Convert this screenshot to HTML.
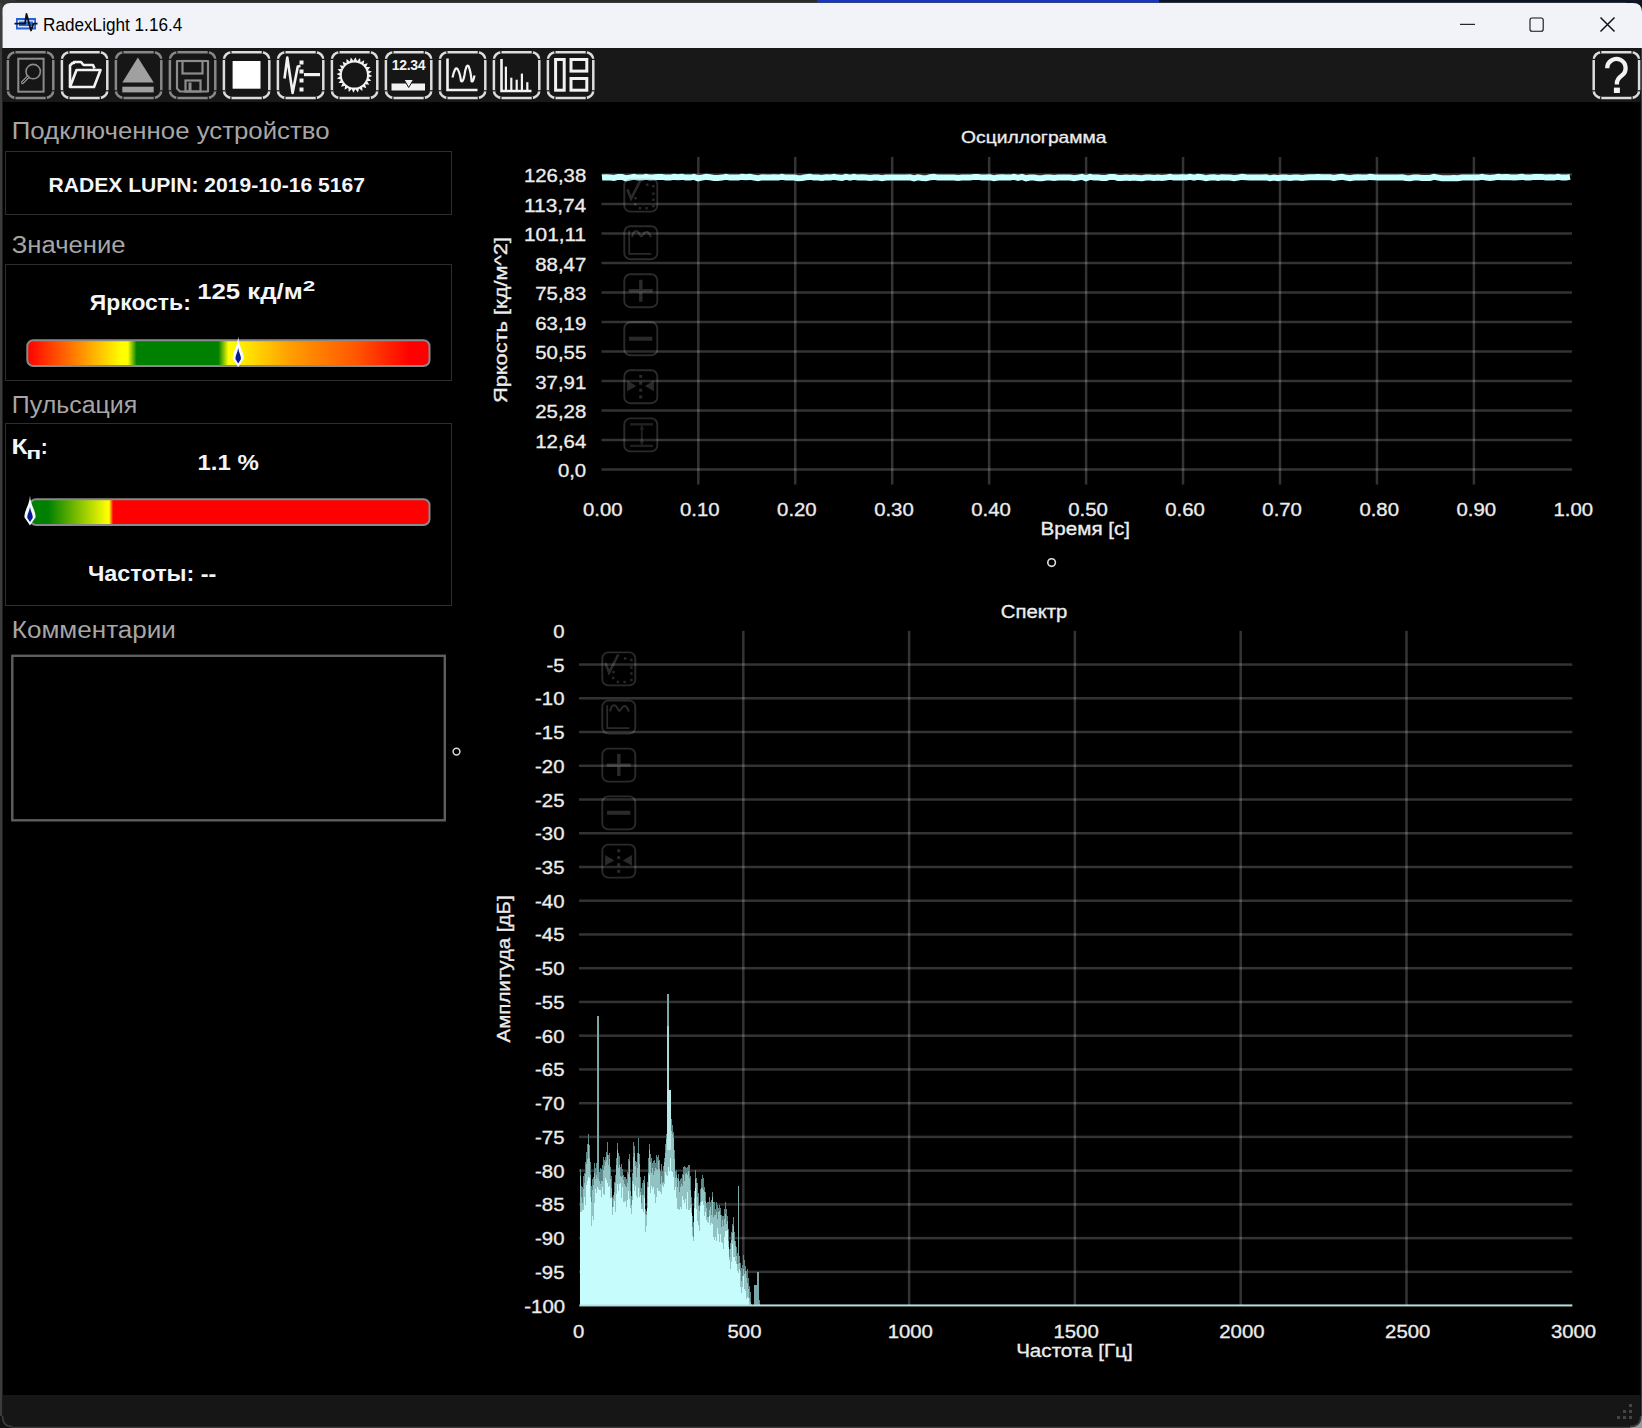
<!DOCTYPE html>
<html><head><meta charset="utf-8"><title>RadexLight</title>
<style>html,body{margin:0;padding:0;background:#000;overflow:hidden;width:1642px;height:1428px}
svg{display:block;font-family:"Liberation Sans", sans-serif}</style></head>
<body><svg width="1642" height="1428" viewBox="0 0 1642 1428">
<rect x="0" y="0" width="1642" height="1428" fill="#000"/>
<rect x="0" y="0" width="817" height="3" fill="#2a2a2a"/>
<rect x="817" y="0" width="342" height="3" fill="#1534c8"/>
<rect x="1159" y="0" width="483" height="3" fill="#0a1428"/>
<rect x="0" y="2" width="1642" height="1" fill="#4a4a4a" opacity="0.6"/>
<rect x="0" y="0" width="16" height="16" fill="#333"/>
<rect x="1626" y="0" width="16" height="16" fill="#0e1626"/>
<rect x="0" y="3" width="2.5" height="1425" fill="#3c3c3c"/>
<rect x="1640.8" y="48" width="1.2" height="1380" fill="#3c3c3c"/>
<path d="M2.5 48 V11 Q2.5 3 10.5 3 H1633 Q1642 3 1642 12 V48 Z" fill="#f1f3f9"/>
<rect x="16" y="18" width="20" height="11.5" fill="#2563d9"/>
<rect x="17.8" y="20.2" width="16.4" height="7.2" fill="#f1f3f9"/>
<rect x="19" y="21.5" width="14" height="4.6" fill="#2563d9"/>
<polyline points="14.5,23.6 25,23.6 26.5,14 31,30.5 33.5,23.6 37.5,23.6" fill="none" stroke="#111" stroke-width="1.8" stroke-linejoin="round"/>
<text x="43" y="31" font-size="17.5" fill="#000" font-weight="400" text-anchor="start" textLength="139.3" lengthAdjust="spacingAndGlyphs" >RadexLight 1.16.4</text>
<rect x="1460" y="23.8" width="15" height="1.1" fill="#111"/>
<rect x="1530" y="18" width="13.2" height="13.2" rx="2" fill="none" stroke="#111" stroke-width="1.1"/>
<path d="M1600.5 17.5 L1614.5 31.5 M1614.5 17.5 L1600.5 31.5" stroke="#111" stroke-width="1.45"/>
<rect x="2.5" y="48" width="1638.3" height="54" fill="#181818"/>
<rect x="2.5" y="1395" width="1638.3" height="31.6" fill="#161616"/>
<rect x="1629" y="1404" width="3" height="3" fill="#444"/>
<rect x="1623" y="1410" width="3" height="3" fill="#444"/>
<rect x="1629" y="1410" width="3" height="3" fill="#444"/>
<rect x="1617" y="1416" width="3" height="3" fill="#444"/>
<rect x="1623" y="1416" width="3" height="3" fill="#444"/>
<rect x="1629" y="1416" width="3" height="3" fill="#444"/>
<rect x="0" y="1426.6" width="1642" height="1.4" fill="#3c3c3c"/>
<path d="M0 1416 V1428 H12 V1426.6 Q2.5 1426.6 2.5 1417 V1416 Z" fill="#121212"/>
<path d="M2.5 1416 Q2.5 1426.6 12 1426.6" fill="none" stroke="#3c3c3c" stroke-width="1.6"/>
<path d="M1642 1416 V1428 H1630 V1426.6 Q1640.8 1426.6 1640.8 1417 V1416 Z" fill="#9a9a9a"/>
<path d="M1640.8 1416 Q1640.8 1426.6 1630 1426.6" fill="none" stroke="#3c3c3c" stroke-width="1.6"/>
<rect x="7.9" y="52.3" width="45.4" height="45.6" rx="7.5" fill="#161616" stroke="#888" stroke-width="2.5"/>
<rect x="14.3" y="50.5" width="1.2" height="3.2" fill="#181818"/>
<rect x="14.3" y="96.5" width="1.2" height="3.2" fill="#181818"/>
<rect x="45.7" y="50.5" width="1.2" height="3.2" fill="#181818"/>
<rect x="45.7" y="96.5" width="1.2" height="3.2" fill="#181818"/>
<rect x="6.0" y="58.8" width="3.2" height="1.2" fill="#181818"/>
<rect x="52.0" y="58.8" width="3.2" height="1.2" fill="#181818"/>
<rect x="6.0" y="90.2" width="3.2" height="1.2" fill="#181818"/>
<rect x="52.0" y="90.2" width="3.2" height="1.2" fill="#181818"/>
<rect x="61.9" y="52.3" width="45.4" height="45.6" rx="7.5" fill="#161616" stroke="#dcdcdc" stroke-width="2.5"/>
<rect x="68.30000000000001" y="50.5" width="1.2" height="3.2" fill="#181818"/>
<rect x="68.30000000000001" y="96.5" width="1.2" height="3.2" fill="#181818"/>
<rect x="99.7" y="50.5" width="1.2" height="3.2" fill="#181818"/>
<rect x="99.7" y="96.5" width="1.2" height="3.2" fill="#181818"/>
<rect x="60.0" y="58.8" width="3.2" height="1.2" fill="#181818"/>
<rect x="106.0" y="58.8" width="3.2" height="1.2" fill="#181818"/>
<rect x="60.0" y="90.2" width="3.2" height="1.2" fill="#181818"/>
<rect x="106.0" y="90.2" width="3.2" height="1.2" fill="#181818"/>
<rect x="115.9" y="52.3" width="45.4" height="45.6" rx="7.5" fill="#161616" stroke="#888" stroke-width="2.5"/>
<rect x="122.30000000000001" y="50.5" width="1.2" height="3.2" fill="#181818"/>
<rect x="122.30000000000001" y="96.5" width="1.2" height="3.2" fill="#181818"/>
<rect x="153.7" y="50.5" width="1.2" height="3.2" fill="#181818"/>
<rect x="153.7" y="96.5" width="1.2" height="3.2" fill="#181818"/>
<rect x="114.0" y="58.8" width="3.2" height="1.2" fill="#181818"/>
<rect x="160.0" y="58.8" width="3.2" height="1.2" fill="#181818"/>
<rect x="114.0" y="90.2" width="3.2" height="1.2" fill="#181818"/>
<rect x="160.0" y="90.2" width="3.2" height="1.2" fill="#181818"/>
<rect x="169.9" y="52.3" width="45.4" height="45.6" rx="7.5" fill="#161616" stroke="#888" stroke-width="2.5"/>
<rect x="176.3" y="50.5" width="1.2" height="3.2" fill="#181818"/>
<rect x="176.3" y="96.5" width="1.2" height="3.2" fill="#181818"/>
<rect x="207.7" y="50.5" width="1.2" height="3.2" fill="#181818"/>
<rect x="207.7" y="96.5" width="1.2" height="3.2" fill="#181818"/>
<rect x="168.0" y="58.8" width="3.2" height="1.2" fill="#181818"/>
<rect x="214.0" y="58.8" width="3.2" height="1.2" fill="#181818"/>
<rect x="168.0" y="90.2" width="3.2" height="1.2" fill="#181818"/>
<rect x="214.0" y="90.2" width="3.2" height="1.2" fill="#181818"/>
<rect x="223.9" y="52.3" width="45.4" height="45.6" rx="7.5" fill="#161616" stroke="#dcdcdc" stroke-width="2.5"/>
<rect x="230.3" y="50.5" width="1.2" height="3.2" fill="#181818"/>
<rect x="230.3" y="96.5" width="1.2" height="3.2" fill="#181818"/>
<rect x="261.7" y="50.5" width="1.2" height="3.2" fill="#181818"/>
<rect x="261.7" y="96.5" width="1.2" height="3.2" fill="#181818"/>
<rect x="222.0" y="58.8" width="3.2" height="1.2" fill="#181818"/>
<rect x="268.0" y="58.8" width="3.2" height="1.2" fill="#181818"/>
<rect x="222.0" y="90.2" width="3.2" height="1.2" fill="#181818"/>
<rect x="268.0" y="90.2" width="3.2" height="1.2" fill="#181818"/>
<rect x="277.9" y="52.3" width="45.4" height="45.6" rx="7.5" fill="#161616" stroke="#dcdcdc" stroke-width="2.5"/>
<rect x="284.29999999999995" y="50.5" width="1.2" height="3.2" fill="#181818"/>
<rect x="284.29999999999995" y="96.5" width="1.2" height="3.2" fill="#181818"/>
<rect x="315.7" y="50.5" width="1.2" height="3.2" fill="#181818"/>
<rect x="315.7" y="96.5" width="1.2" height="3.2" fill="#181818"/>
<rect x="276.0" y="58.8" width="3.2" height="1.2" fill="#181818"/>
<rect x="322.0" y="58.8" width="3.2" height="1.2" fill="#181818"/>
<rect x="276.0" y="90.2" width="3.2" height="1.2" fill="#181818"/>
<rect x="322.0" y="90.2" width="3.2" height="1.2" fill="#181818"/>
<rect x="331.9" y="52.3" width="45.4" height="45.6" rx="7.5" fill="#161616" stroke="#dcdcdc" stroke-width="2.5"/>
<rect x="338.29999999999995" y="50.5" width="1.2" height="3.2" fill="#181818"/>
<rect x="338.29999999999995" y="96.5" width="1.2" height="3.2" fill="#181818"/>
<rect x="369.7" y="50.5" width="1.2" height="3.2" fill="#181818"/>
<rect x="369.7" y="96.5" width="1.2" height="3.2" fill="#181818"/>
<rect x="330.0" y="58.8" width="3.2" height="1.2" fill="#181818"/>
<rect x="376.0" y="58.8" width="3.2" height="1.2" fill="#181818"/>
<rect x="330.0" y="90.2" width="3.2" height="1.2" fill="#181818"/>
<rect x="376.0" y="90.2" width="3.2" height="1.2" fill="#181818"/>
<rect x="385.9" y="52.3" width="45.4" height="45.6" rx="7.5" fill="#161616" stroke="#dcdcdc" stroke-width="2.5"/>
<rect x="392.29999999999995" y="50.5" width="1.2" height="3.2" fill="#181818"/>
<rect x="392.29999999999995" y="96.5" width="1.2" height="3.2" fill="#181818"/>
<rect x="423.7" y="50.5" width="1.2" height="3.2" fill="#181818"/>
<rect x="423.7" y="96.5" width="1.2" height="3.2" fill="#181818"/>
<rect x="384.0" y="58.8" width="3.2" height="1.2" fill="#181818"/>
<rect x="430.0" y="58.8" width="3.2" height="1.2" fill="#181818"/>
<rect x="384.0" y="90.2" width="3.2" height="1.2" fill="#181818"/>
<rect x="430.0" y="90.2" width="3.2" height="1.2" fill="#181818"/>
<rect x="439.9" y="52.3" width="45.4" height="45.6" rx="7.5" fill="#161616" stroke="#dcdcdc" stroke-width="2.5"/>
<rect x="446.29999999999995" y="50.5" width="1.2" height="3.2" fill="#181818"/>
<rect x="446.29999999999995" y="96.5" width="1.2" height="3.2" fill="#181818"/>
<rect x="477.7" y="50.5" width="1.2" height="3.2" fill="#181818"/>
<rect x="477.7" y="96.5" width="1.2" height="3.2" fill="#181818"/>
<rect x="438.0" y="58.8" width="3.2" height="1.2" fill="#181818"/>
<rect x="484.0" y="58.8" width="3.2" height="1.2" fill="#181818"/>
<rect x="438.0" y="90.2" width="3.2" height="1.2" fill="#181818"/>
<rect x="484.0" y="90.2" width="3.2" height="1.2" fill="#181818"/>
<rect x="493.9" y="52.3" width="45.4" height="45.6" rx="7.5" fill="#161616" stroke="#dcdcdc" stroke-width="2.5"/>
<rect x="500.29999999999995" y="50.5" width="1.2" height="3.2" fill="#181818"/>
<rect x="500.29999999999995" y="96.5" width="1.2" height="3.2" fill="#181818"/>
<rect x="531.7" y="50.5" width="1.2" height="3.2" fill="#181818"/>
<rect x="531.7" y="96.5" width="1.2" height="3.2" fill="#181818"/>
<rect x="492.0" y="58.8" width="3.2" height="1.2" fill="#181818"/>
<rect x="538.0" y="58.8" width="3.2" height="1.2" fill="#181818"/>
<rect x="492.0" y="90.2" width="3.2" height="1.2" fill="#181818"/>
<rect x="538.0" y="90.2" width="3.2" height="1.2" fill="#181818"/>
<rect x="547.9" y="52.3" width="45.4" height="45.6" rx="7.5" fill="#161616" stroke="#dcdcdc" stroke-width="2.5"/>
<rect x="554.3" y="50.5" width="1.2" height="3.2" fill="#181818"/>
<rect x="554.3" y="96.5" width="1.2" height="3.2" fill="#181818"/>
<rect x="585.7" y="50.5" width="1.2" height="3.2" fill="#181818"/>
<rect x="585.7" y="96.5" width="1.2" height="3.2" fill="#181818"/>
<rect x="546.0" y="58.8" width="3.2" height="1.2" fill="#181818"/>
<rect x="592.0" y="58.8" width="3.2" height="1.2" fill="#181818"/>
<rect x="546.0" y="90.2" width="3.2" height="1.2" fill="#181818"/>
<rect x="592.0" y="90.2" width="3.2" height="1.2" fill="#181818"/>
<rect x="1593.7" y="52.3" width="45.4" height="45.6" rx="7.5" fill="#161616" stroke="#dcdcdc" stroke-width="2.5"/>
<rect x="1600.1000000000001" y="50.5" width="1.2" height="3.2" fill="#181818"/>
<rect x="1600.1000000000001" y="96.5" width="1.2" height="3.2" fill="#181818"/>
<rect x="1631.5" y="50.5" width="1.2" height="3.2" fill="#181818"/>
<rect x="1631.5" y="96.5" width="1.2" height="3.2" fill="#181818"/>
<rect x="1591.8" y="58.8" width="3.2" height="1.2" fill="#181818"/>
<rect x="1637.8" y="58.8" width="3.2" height="1.2" fill="#181818"/>
<rect x="1591.8" y="90.2" width="3.2" height="1.2" fill="#181818"/>
<rect x="1637.8" y="90.2" width="3.2" height="1.2" fill="#181818"/>
<rect x="18.3" y="58.7" width="25.3" height="33" fill="none" stroke="#8c8c8c" stroke-width="2"/>
<circle cx="33.2" cy="71.6" r="7.2" fill="none" stroke="#8c8c8c" stroke-width="1.6"/>
<line x1="28" y1="77" x2="22.5" y2="82.5" stroke="#8c8c8c" stroke-width="3.2" stroke-linecap="round"/>
<line x1="28" y1="77" x2="22.5" y2="82.5" stroke="#141414" stroke-width="1" stroke-linecap="round"/>
<path d="M70 87 V65.5 L72.5 63 H74 V62 H81 L83.5 65 H93 L94.5 68.5" fill="none" stroke="#f2f2f2" stroke-width="2.6" stroke-linejoin="round"/>
<path d="M70 87 L76.5 70 H100.5 L94 87 Z" fill="none" stroke="#f2f2f2" stroke-width="2.6" stroke-linejoin="round"/>
<path d="M137.9 57.6 L153.7 82.4 H122.3 Z" fill="#a0a0a0"/>
<rect x="122.3" y="86.7" width="31.4" height="5.7" fill="#a0a0a0"/>
<path d="M177 61 H208 V91.5 H180 L177 88.5 Z" fill="none" stroke="#8c8c8c" stroke-width="2.2" stroke-linejoin="round"/>
<rect x="182.5" y="61" width="20" height="12.5" fill="none" stroke="#8c8c8c" stroke-width="2.2"/>
<rect x="185.5" y="80.5" width="15" height="11" fill="none" stroke="#8c8c8c" stroke-width="2.2"/>
<rect x="188.5" y="82.5" width="3" height="9" fill="#8c8c8c"/>
<rect x="232.6" y="61" width="27.9" height="27.7" fill="#fff"/>
<path d="M284.5 78.5 L287.3 57.5 L292.6 93 L297.8 66.5 L300.5 66" fill="none" stroke="#f2f2f2" stroke-width="2.6" stroke-linejoin="round"/>
<rect x="299.5" y="60.5" width="4" height="4" fill="#f2f2f2"/>
<rect x="299.5" y="69.5" width="4" height="4" fill="#f2f2f2"/>
<rect x="299.5" y="78.5" width="4" height="4" fill="#f2f2f2"/>
<rect x="299.5" y="87.5" width="4" height="4" fill="#f2f2f2"/>
<rect x="304" y="73" width="16" height="3.2" fill="#f2f2f2"/>
<polygon points="372.17,76.07 368.34,77.69 371.29,80.63 367.17,81.21 369.25,84.81 365.13,84.30 366.21,88.32 362.35,86.76 362.36,90.92 359.04,88.42 357.97,92.44 355.41,89.16 353.33,92.77 351.71,88.94 348.77,91.89 348.19,87.77 344.59,89.85 345.10,85.73 341.08,86.81 342.64,82.95 338.48,82.96 340.98,79.64 336.96,78.57 340.24,76.01 336.63,73.93 340.46,72.31 337.51,69.37 341.63,68.79 339.55,65.19 343.67,65.70 342.59,61.68 346.45,63.24 346.44,59.08 349.76,61.58 350.83,57.56 353.39,60.84 355.47,57.23 357.09,61.06 360.03,58.11 360.61,62.23 364.21,60.15 363.70,64.27 367.72,63.19 366.16,67.05 370.32,67.04 367.82,70.36 371.84,71.43 368.56,73.99" fill="#f2f2f2"/>
<circle cx="354.4" cy="75" r="12.6" fill="#161616"/>
<text x="408.5" y="70" font-size="14" font-weight="700" fill="#f2f2f2" text-anchor="middle" letter-spacing="-0.3">12.34</text>
<rect x="391.5" y="83.5" width="33.5" height="7" fill="#f2f2f2"/>
<path d="M404 79.5 H413.5 L408.7 87.5 Z" fill="#f2f2f2" stroke="#141414" stroke-width="1"/>
<path d="M447.5 58.5 V90 H477.5" fill="none" stroke="#f2f2f2" stroke-width="2.6"/>
<path d="M452.5 77.5 Q455 66 457.5 69 Q460 73 461 81 Q463 83 464.5 75 Q466 64 468.5 66 Q471 72 471.5 81 Q473 83 474.5 75.5" fill="none" stroke="#f2f2f2" stroke-width="2.2"/>
<path d="M501.5 59 V91 H531.5" fill="none" stroke="#f2f2f2" stroke-width="2.6"/>
<rect x="504.8" y="66.6" width="2.2" height="24.400000000000006" fill="#f2f2f2"/>
<rect x="510.2" y="77.7" width="2.2" height="13.299999999999997" fill="#f2f2f2"/>
<rect x="515.6" y="79.7" width="2.2" height="11.299999999999997" fill="#f2f2f2"/>
<rect x="520.8" y="73.6" width="2.2" height="17.400000000000006" fill="#f2f2f2"/>
<rect x="526.2" y="82.2" width="2.2" height="8.799999999999997" fill="#f2f2f2"/>
<rect x="555.6" y="59.5" width="8.6" height="30.7" fill="none" stroke="#f2f2f2" stroke-width="3"/>
<rect x="571" y="59.5" width="15.8" height="11.6" fill="none" stroke="#f2f2f2" stroke-width="3"/>
<rect x="571" y="78.5" width="15.8" height="11.7" fill="none" stroke="#f2f2f2" stroke-width="3"/>
<path d="M1607.2 68.2 A9.2 9.2 0 1 1 1621.8 75.6 Q1616.9 79.2 1616.9 83.2 V84.6" fill="none" stroke="#f2f2f2" stroke-width="4.3"/>
<rect x="1613.9" y="87.6" width="6" height="5.4" fill="#f2f2f2"/>
<text x="11.8" y="139.2" font-size="23" fill="#a6a6a6" font-weight="400" text-anchor="start" textLength="317.7" lengthAdjust="spacingAndGlyphs" >Подключенное устройство</text>
<rect x="5.5" y="151.5" width="446" height="63" fill="none" stroke="#2e2e2e" stroke-width="1"/>
<text x="48.5" y="192" font-size="20" fill="#f2f5fa" font-weight="700" text-anchor="start" textLength="316.5" lengthAdjust="spacingAndGlyphs" >RADEX LUPIN: 2019-10-16 5167</text>
<text x="11.8" y="253" font-size="23" fill="#a6a6a6" font-weight="400" text-anchor="start" textLength="113.7" lengthAdjust="spacingAndGlyphs" >Значение</text>
<rect x="5.5" y="264.5" width="446" height="116" fill="none" stroke="#2e2e2e" stroke-width="1"/>
<text x="89.8" y="310.3" font-size="22" fill="#f2f5fa" font-weight="700" text-anchor="start" textLength="101.0" lengthAdjust="spacingAndGlyphs" >Яркость:</text>
<text x="197.2" y="299.2" font-size="22" fill="#f2f5fa" font-weight="700" text-anchor="start" textLength="105.5" lengthAdjust="spacingAndGlyphs" >125 кд/м</text>
<text x="302.8" y="291.3" font-size="15.5" fill="#f2f5fa" font-weight="700" text-anchor="start" textLength="12.5" lengthAdjust="spacingAndGlyphs" >2</text>
<defs>
<linearGradient id="gb" x1="0" x2="1" y1="0" y2="0">
<stop offset="0" stop-color="#ff0000"/>
<stop offset="0.12" stop-color="#ff8000"/>
<stop offset="0.235" stop-color="#ffff00"/>
<stop offset="0.25" stop-color="#ffff00"/>
<stop offset="0.272" stop-color="#008000"/>
<stop offset="0.475" stop-color="#008000"/>
<stop offset="0.5" stop-color="#ffff00"/>
<stop offset="0.53" stop-color="#ffee00"/>
<stop offset="0.65" stop-color="#ffa000"/>
<stop offset="0.82" stop-color="#ff5500"/>
<stop offset="0.95" stop-color="#ff0000"/>
<stop offset="1" stop-color="#ff0000"/>
</linearGradient>
<linearGradient id="gp" x1="0" x2="1" y1="0" y2="0">
<stop offset="0" stop-color="#008000"/>
<stop offset="0.045" stop-color="#008000"/>
<stop offset="0.195" stop-color="#ffff00"/>
<stop offset="0.198" stop-color="#ffff00"/>
<stop offset="0.202" stop-color="#ffa000"/>
<stop offset="0.208" stop-color="#ff0000"/>
<stop offset="1" stop-color="#ff0000"/>
</linearGradient>
</defs>
<rect x="27.3" y="340.2" width="402.2" height="25.8" rx="6" fill="url(#gb)" stroke="#8a8a8a" stroke-width="2"/>
<path d="M238.2 336.5 C239.0 347.175 243.79999999999998 351.14 243.79999999999998 358.765 L238.2 367 L232.6 358.765 C232.6 351.14 237.39999999999998 347.175 238.2 336.5 Z" fill="#f4f8ff"/>
<path d="M238.2 348.09 C238.79999999999998 352.66499999999996 241.0 355.40999999999997 241.0 359.07 L238.2 363.5 L235.39999999999998 359.07 C235.39999999999998 355.40999999999997 237.6 352.66499999999996 238.2 348.09 Z" fill="#081890"/>
<text x="11.8" y="412.5" font-size="23" fill="#a6a6a6" font-weight="400" text-anchor="start" textLength="125.4" lengthAdjust="spacingAndGlyphs" >Пульсация</text>
<rect x="5.5" y="423.5" width="446" height="182" fill="none" stroke="#2e2e2e" stroke-width="1"/>
<text x="11.5" y="454.4" font-size="22" fill="#f2f5fa" font-weight="700" text-anchor="start" textLength="16.0" lengthAdjust="spacingAndGlyphs" >К</text>
<text x="26.3" y="458.8" font-size="17" fill="#f2f5fa" font-weight="700" text-anchor="start" textLength="15.0" lengthAdjust="spacingAndGlyphs" >п</text>
<text x="40.8" y="454.4" font-size="22" fill="#f2f5fa" font-weight="700" text-anchor="start" textLength="7.0" lengthAdjust="spacingAndGlyphs" >:</text>
<text x="197.5" y="469.6" font-size="22.5" fill="#f2f5fa" font-weight="700" text-anchor="start" textLength="61.5" lengthAdjust="spacingAndGlyphs" >1.1 %</text>
<rect x="30" y="499.2" width="399.5" height="25.8" rx="6" fill="url(#gp)" stroke="#8a8a8a" stroke-width="2"/>
<path d="M30 495.4 C30.8 505.935 35.6 509.84800000000007 35.6 517.373 L30 525.5 L24.4 517.373 C24.4 509.84800000000007 29.2 505.935 30 495.4 Z" fill="#f4f8ff"/>
<path d="M30 506.83799999999997 C30.6 511.35299999999995 32.8 514.062 32.8 517.674 L30 522.0 L27.2 517.674 C27.2 514.062 29.4 511.35299999999995 30 506.83799999999997 Z" fill="#081890"/>
<text x="87.9" y="580.8" font-size="22.5" fill="#f2f5fa" font-weight="700" text-anchor="start" textLength="128.5" lengthAdjust="spacingAndGlyphs" >Частоты: --</text>
<text x="11.8" y="637.5" font-size="23" fill="#a6a6a6" font-weight="400" text-anchor="start" textLength="164.1" lengthAdjust="spacingAndGlyphs" >Комментарии</text>
<rect x="12.3" y="655.8" width="432.5" height="164.5" fill="none" stroke="#5e5e5e" stroke-width="2.4"/>
<circle cx="456.5" cy="751.6" r="3.4" fill="none" stroke="#d8d8d8" stroke-width="1.5"/>
<rect x="601.5" y="468.25" width="970.5" height="2.5" fill="rgba(255,255,255,0.2)"/>
<rect x="601.5" y="438.75" width="970.5" height="2.5" fill="rgba(255,255,255,0.2)"/>
<rect x="601.5" y="409.25" width="970.5" height="2.5" fill="rgba(255,255,255,0.2)"/>
<rect x="601.5" y="379.75" width="970.5" height="2.5" fill="rgba(255,255,255,0.2)"/>
<rect x="601.5" y="350.25" width="970.5" height="2.5" fill="rgba(255,255,255,0.2)"/>
<rect x="601.5" y="320.75" width="970.5" height="2.5" fill="rgba(255,255,255,0.2)"/>
<rect x="601.5" y="291.25" width="970.5" height="2.5" fill="rgba(255,255,255,0.2)"/>
<rect x="601.5" y="261.75" width="970.5" height="2.5" fill="rgba(255,255,255,0.2)"/>
<rect x="601.5" y="232.25" width="970.5" height="2.5" fill="rgba(255,255,255,0.2)"/>
<rect x="601.5" y="202.75" width="970.5" height="2.5" fill="rgba(255,255,255,0.2)"/>
<rect x="601.5" y="173.25" width="970.5" height="2.5" fill="rgba(255,255,255,0.2)"/>
<rect x="697.05" y="157" width="2.5" height="327.5" fill="rgba(255,255,255,0.2)"/>
<rect x="794.00" y="157" width="2.5" height="327.5" fill="rgba(255,255,255,0.2)"/>
<rect x="890.95" y="157" width="2.5" height="327.5" fill="rgba(255,255,255,0.2)"/>
<rect x="987.90" y="157" width="2.5" height="327.5" fill="rgba(255,255,255,0.2)"/>
<rect x="1084.85" y="157" width="2.5" height="327.5" fill="rgba(255,255,255,0.2)"/>
<rect x="1181.80" y="157" width="2.5" height="327.5" fill="rgba(255,255,255,0.2)"/>
<rect x="1278.75" y="157" width="2.5" height="327.5" fill="rgba(255,255,255,0.2)"/>
<rect x="1375.70" y="157" width="2.5" height="327.5" fill="rgba(255,255,255,0.2)"/>
<rect x="1472.65" y="157" width="2.5" height="327.5" fill="rgba(255,255,255,0.2)"/>
<text x="586.2" y="477.0" font-size="18" fill="#ececec" font-weight="400" text-anchor="end" textLength="28.3" lengthAdjust="spacingAndGlyphs" stroke="#ececec" stroke-width="0.32">0,0</text>
<text x="586.2" y="447.5" font-size="18" fill="#ececec" font-weight="400" text-anchor="end" textLength="50.9" lengthAdjust="spacingAndGlyphs" stroke="#ececec" stroke-width="0.32">12,64</text>
<text x="586.2" y="418.0" font-size="18" fill="#ececec" font-weight="400" text-anchor="end" textLength="50.9" lengthAdjust="spacingAndGlyphs" stroke="#ececec" stroke-width="0.32">25,28</text>
<text x="586.2" y="388.5" font-size="18" fill="#ececec" font-weight="400" text-anchor="end" textLength="50.9" lengthAdjust="spacingAndGlyphs" stroke="#ececec" stroke-width="0.32">37,91</text>
<text x="586.2" y="359.0" font-size="18" fill="#ececec" font-weight="400" text-anchor="end" textLength="50.9" lengthAdjust="spacingAndGlyphs" stroke="#ececec" stroke-width="0.32">50,55</text>
<text x="586.2" y="329.5" font-size="18" fill="#ececec" font-weight="400" text-anchor="end" textLength="50.9" lengthAdjust="spacingAndGlyphs" stroke="#ececec" stroke-width="0.32">63,19</text>
<text x="586.2" y="300.0" font-size="18" fill="#ececec" font-weight="400" text-anchor="end" textLength="50.9" lengthAdjust="spacingAndGlyphs" stroke="#ececec" stroke-width="0.32">75,83</text>
<text x="586.2" y="270.5" font-size="18" fill="#ececec" font-weight="400" text-anchor="end" textLength="50.9" lengthAdjust="spacingAndGlyphs" stroke="#ececec" stroke-width="0.32">88,47</text>
<text x="586.2" y="241.0" font-size="18" fill="#ececec" font-weight="400" text-anchor="end" textLength="62.2" lengthAdjust="spacingAndGlyphs" stroke="#ececec" stroke-width="0.32">101,11</text>
<text x="586.2" y="211.5" font-size="18" fill="#ececec" font-weight="400" text-anchor="end" textLength="62.2" lengthAdjust="spacingAndGlyphs" stroke="#ececec" stroke-width="0.32">113,74</text>
<text x="586.2" y="182.0" font-size="18" fill="#ececec" font-weight="400" text-anchor="end" textLength="62.2" lengthAdjust="spacingAndGlyphs" stroke="#ececec" stroke-width="0.32">126,38</text>
<text x="602.8" y="515.9" font-size="18" fill="#ececec" font-weight="400" text-anchor="middle" textLength="39.6" lengthAdjust="spacingAndGlyphs" stroke="#ececec" stroke-width="0.32">0.00</text>
<text x="699.8499999999999" y="515.9" font-size="18" fill="#ececec" font-weight="400" text-anchor="middle" textLength="39.6" lengthAdjust="spacingAndGlyphs" stroke="#ececec" stroke-width="0.32">0.10</text>
<text x="796.9" y="515.9" font-size="18" fill="#ececec" font-weight="400" text-anchor="middle" textLength="39.6" lengthAdjust="spacingAndGlyphs" stroke="#ececec" stroke-width="0.32">0.20</text>
<text x="893.9499999999999" y="515.9" font-size="18" fill="#ececec" font-weight="400" text-anchor="middle" textLength="39.6" lengthAdjust="spacingAndGlyphs" stroke="#ececec" stroke-width="0.32">0.30</text>
<text x="991.0" y="515.9" font-size="18" fill="#ececec" font-weight="400" text-anchor="middle" textLength="39.6" lengthAdjust="spacingAndGlyphs" stroke="#ececec" stroke-width="0.32">0.40</text>
<text x="1088.05" y="515.9" font-size="18" fill="#ececec" font-weight="400" text-anchor="middle" textLength="39.6" lengthAdjust="spacingAndGlyphs" stroke="#ececec" stroke-width="0.32">0.50</text>
<text x="1185.1" y="515.9" font-size="18" fill="#ececec" font-weight="400" text-anchor="middle" textLength="39.6" lengthAdjust="spacingAndGlyphs" stroke="#ececec" stroke-width="0.32">0.60</text>
<text x="1282.1499999999999" y="515.9" font-size="18" fill="#ececec" font-weight="400" text-anchor="middle" textLength="39.6" lengthAdjust="spacingAndGlyphs" stroke="#ececec" stroke-width="0.32">0.70</text>
<text x="1379.2" y="515.9" font-size="18" fill="#ececec" font-weight="400" text-anchor="middle" textLength="39.6" lengthAdjust="spacingAndGlyphs" stroke="#ececec" stroke-width="0.32">0.80</text>
<text x="1476.25" y="515.9" font-size="18" fill="#ececec" font-weight="400" text-anchor="middle" textLength="39.6" lengthAdjust="spacingAndGlyphs" stroke="#ececec" stroke-width="0.32">0.90</text>
<text x="1573.3" y="515.9" font-size="18" fill="#ececec" font-weight="400" text-anchor="middle" textLength="39.6" lengthAdjust="spacingAndGlyphs" stroke="#ececec" stroke-width="0.32">1.00</text>
<text x="1033.8" y="143.1" font-size="17" fill="#ececec" font-weight="400" text-anchor="middle" textLength="145.5" lengthAdjust="spacingAndGlyphs" stroke="#ececec" stroke-width="0.32">Осциллограмма</text>
<text x="1085.3" y="535" font-size="17.5" fill="#ececec" font-weight="400" text-anchor="middle" textLength="89.5" lengthAdjust="spacingAndGlyphs" stroke="#ececec" stroke-width="0.32">Время [c]</text>
<text x="0" y="0" font-size="18" fill="#ececec" stroke="#ececec" stroke-width="0.32" textLength="166" lengthAdjust="spacingAndGlyphs" text-anchor="middle" transform="translate(507.4 320.1) rotate(-90)">Яркость [кд/м^2]</text>
<circle cx="1051.6" cy="562.6" r="3.8" fill="none" stroke="#e0e0e0" stroke-width="1.6"/>
<polyline points="602,177.6 606,177.29999999999998 610,177.6 614,177.9 618,176.9 622,176.9 626,178.29999999999998 630,177.6 634,176.9 638,177.6 642,177.6 646,176.9 650,177.6 654,177.29999999999998 658,176.9 662,176.9 666,177.6 670,177.6 674,176.9 678,177.29999999999998 682,176.9 686,177.6 690,177.6 694,176.9 698,178.29999999999998 702,177.6 706,176.9 710,177.29999999999998 714,177.9 718,177.9 722,177.6 726,176.9 730,177.6 734,177.6 738,177.6 742,176.9 746,177.29999999999998 750,176.9 754,177.6 758,178.29999999999998 762,177.29999999999998 766,177.6 770,177.6 774,177.29999999999998 778,177.6 782,176.9 786,177.6 790,177.6 794,177.6 798,178.29999999999998 802,177.9 806,177.29999999999998 810,176.9 814,177.6 818,177.6 822,177.9 826,177.29999999999998 830,177.6 834,176.9 838,177.6 842,177.9 846,176.9 850,177.6 854,176.9 858,177.6 862,177.29999999999998 866,177.6 870,177.9 874,177.6 878,177.6 882,178.29999999999998 886,177.6 890,177.6 894,177.6 898,177.6 902,177.6 906,177.6 910,177.29999999999998 914,178.29999999999998 918,177.29999999999998 922,177.9 926,178.29999999999998 930,177.29999999999998 934,176.9 938,177.6 942,177.6 946,177.6 950,177.6 954,177.6 958,177.9 962,177.6 966,177.6 970,177.6 974,176.9 978,176.9 982,177.6 986,177.6 990,177.29999999999998 994,178.29999999999998 998,177.6 1002,177.29999999999998 1006,177.6 1010,177.6 1014,176.9 1018,177.9 1022,176.9 1026,178.29999999999998 1030,177.6 1034,177.6 1038,178.29999999999998 1042,178.29999999999998 1046,177.6 1050,177.6 1054,177.9 1058,177.6 1062,177.6 1066,177.6 1070,177.6 1074,178.29999999999998 1078,177.6 1082,176.9 1086,178.29999999999998 1090,176.9 1094,177.6 1098,177.6 1102,177.9 1106,177.9 1110,176.9 1114,176.9 1118,177.9 1122,177.9 1126,177.6 1130,177.9 1134,177.6 1138,177.9 1142,178.29999999999998 1146,177.6 1150,177.6 1154,177.9 1158,177.6 1162,177.9 1166,177.6 1170,176.9 1174,177.6 1178,177.6 1182,177.29999999999998 1186,177.6 1190,176.9 1194,177.6 1198,176.9 1202,177.29999999999998 1206,178.29999999999998 1210,177.6 1214,177.29999999999998 1218,177.9 1222,177.29999999999998 1226,177.6 1230,177.6 1234,178.29999999999998 1238,177.6 1242,176.9 1246,177.29999999999998 1250,177.6 1254,177.6 1258,177.6 1262,177.6 1266,177.29999999999998 1270,178.29999999999998 1274,177.6 1278,178.29999999999998 1282,177.6 1286,177.6 1290,177.9 1294,177.6 1298,177.6 1302,177.9 1306,177.6 1310,177.29999999999998 1314,177.29999999999998 1318,176.9 1322,177.29999999999998 1326,177.29999999999998 1330,177.29999999999998 1334,177.9 1338,177.29999999999998 1342,176.9 1346,177.6 1350,178.29999999999998 1354,177.6 1358,177.29999999999998 1362,177.6 1366,177.6 1370,176.9 1374,177.29999999999998 1378,177.6 1382,177.6 1386,177.6 1390,177.6 1394,177.6 1398,177.6 1402,177.29999999999998 1406,177.9 1410,178.29999999999998 1414,177.6 1418,177.6 1422,177.9 1426,177.9 1430,177.9 1434,176.9 1438,177.6 1442,178.29999999999998 1446,178.29999999999998 1450,178.29999999999998 1454,177.9 1458,178.29999999999998 1462,177.6 1466,177.6 1470,177.6 1474,177.6 1478,177.6 1482,176.9 1486,177.6 1490,177.9 1494,177.6 1498,176.9 1502,177.29999999999998 1506,176.9 1510,177.29999999999998 1514,177.6 1518,177.29999999999998 1522,176.9 1526,177.6 1530,177.6 1534,176.9 1538,176.9 1542,176.9 1546,177.6 1550,177.29999999999998 1554,177.6 1558,176.9 1562,177.6 1566,177.6 1570,176.9" fill="none" stroke="#c8ffff" stroke-width="6"/>
<rect x="579" y="663.29" width="993.30" height="2.5" fill="rgba(255,255,255,0.2)"/>
<rect x="579" y="697.03" width="993.30" height="2.5" fill="rgba(255,255,255,0.2)"/>
<rect x="579" y="730.77" width="993.30" height="2.5" fill="rgba(255,255,255,0.2)"/>
<rect x="579" y="764.51" width="993.30" height="2.5" fill="rgba(255,255,255,0.2)"/>
<rect x="579" y="798.25" width="993.30" height="2.5" fill="rgba(255,255,255,0.2)"/>
<rect x="579" y="831.99" width="993.30" height="2.5" fill="rgba(255,255,255,0.2)"/>
<rect x="579" y="865.73" width="993.30" height="2.5" fill="rgba(255,255,255,0.2)"/>
<rect x="579" y="899.47" width="993.30" height="2.5" fill="rgba(255,255,255,0.2)"/>
<rect x="579" y="933.21" width="993.30" height="2.5" fill="rgba(255,255,255,0.2)"/>
<rect x="579" y="966.95" width="993.30" height="2.5" fill="rgba(255,255,255,0.2)"/>
<rect x="579" y="1000.69" width="993.30" height="2.5" fill="rgba(255,255,255,0.2)"/>
<rect x="579" y="1034.43" width="993.30" height="2.5" fill="rgba(255,255,255,0.2)"/>
<rect x="579" y="1068.17" width="993.30" height="2.5" fill="rgba(255,255,255,0.2)"/>
<rect x="579" y="1101.91" width="993.30" height="2.5" fill="rgba(255,255,255,0.2)"/>
<rect x="579" y="1135.65" width="993.30" height="2.5" fill="rgba(255,255,255,0.2)"/>
<rect x="579" y="1169.39" width="993.30" height="2.5" fill="rgba(255,255,255,0.2)"/>
<rect x="579" y="1203.13" width="993.30" height="2.5" fill="rgba(255,255,255,0.2)"/>
<rect x="579" y="1236.87" width="993.30" height="2.5" fill="rgba(255,255,255,0.2)"/>
<rect x="579" y="1270.61" width="993.30" height="2.5" fill="rgba(255,255,255,0.2)"/>
<rect x="579" y="1304.35" width="993.30" height="2.5" fill="rgba(255,255,255,0.2)"/>
<rect x="742.05" y="630.8" width="2.5" height="675" fill="rgba(255,255,255,0.2)"/>
<rect x="907.85" y="630.8" width="2.5" height="675" fill="rgba(255,255,255,0.2)"/>
<rect x="1073.65" y="630.8" width="2.5" height="675" fill="rgba(255,255,255,0.2)"/>
<rect x="1239.45" y="630.8" width="2.5" height="675" fill="rgba(255,255,255,0.2)"/>
<rect x="1405.25" y="630.8" width="2.5" height="675" fill="rgba(255,255,255,0.2)"/>
<text x="564.5" y="637.8" font-size="18" fill="#ececec" font-weight="400" text-anchor="end" textLength="11.3" lengthAdjust="spacingAndGlyphs" stroke="#ececec" stroke-width="0.32">0</text>
<text x="564.5" y="671.54" font-size="18" fill="#ececec" font-weight="400" text-anchor="end" textLength="18.1" lengthAdjust="spacingAndGlyphs" stroke="#ececec" stroke-width="0.32">-5</text>
<text x="564.5" y="705.28" font-size="18" fill="#ececec" font-weight="400" text-anchor="end" textLength="29.4" lengthAdjust="spacingAndGlyphs" stroke="#ececec" stroke-width="0.32">-10</text>
<text x="564.5" y="739.02" font-size="18" fill="#ececec" font-weight="400" text-anchor="end" textLength="29.4" lengthAdjust="spacingAndGlyphs" stroke="#ececec" stroke-width="0.32">-15</text>
<text x="564.5" y="772.76" font-size="18" fill="#ececec" font-weight="400" text-anchor="end" textLength="29.4" lengthAdjust="spacingAndGlyphs" stroke="#ececec" stroke-width="0.32">-20</text>
<text x="564.5" y="806.5" font-size="18" fill="#ececec" font-weight="400" text-anchor="end" textLength="29.4" lengthAdjust="spacingAndGlyphs" stroke="#ececec" stroke-width="0.32">-25</text>
<text x="564.5" y="840.24" font-size="18" fill="#ececec" font-weight="400" text-anchor="end" textLength="29.4" lengthAdjust="spacingAndGlyphs" stroke="#ececec" stroke-width="0.32">-30</text>
<text x="564.5" y="873.98" font-size="18" fill="#ececec" font-weight="400" text-anchor="end" textLength="29.4" lengthAdjust="spacingAndGlyphs" stroke="#ececec" stroke-width="0.32">-35</text>
<text x="564.5" y="907.72" font-size="18" fill="#ececec" font-weight="400" text-anchor="end" textLength="29.4" lengthAdjust="spacingAndGlyphs" stroke="#ececec" stroke-width="0.32">-40</text>
<text x="564.5" y="941.46" font-size="18" fill="#ececec" font-weight="400" text-anchor="end" textLength="29.4" lengthAdjust="spacingAndGlyphs" stroke="#ececec" stroke-width="0.32">-45</text>
<text x="564.5" y="975.2" font-size="18" fill="#ececec" font-weight="400" text-anchor="end" textLength="29.4" lengthAdjust="spacingAndGlyphs" stroke="#ececec" stroke-width="0.32">-50</text>
<text x="564.5" y="1008.94" font-size="18" fill="#ececec" font-weight="400" text-anchor="end" textLength="29.4" lengthAdjust="spacingAndGlyphs" stroke="#ececec" stroke-width="0.32">-55</text>
<text x="564.5" y="1042.6799999999998" font-size="18" fill="#ececec" font-weight="400" text-anchor="end" textLength="29.4" lengthAdjust="spacingAndGlyphs" stroke="#ececec" stroke-width="0.32">-60</text>
<text x="564.5" y="1076.42" font-size="18" fill="#ececec" font-weight="400" text-anchor="end" textLength="29.4" lengthAdjust="spacingAndGlyphs" stroke="#ececec" stroke-width="0.32">-65</text>
<text x="564.5" y="1110.1599999999999" font-size="18" fill="#ececec" font-weight="400" text-anchor="end" textLength="29.4" lengthAdjust="spacingAndGlyphs" stroke="#ececec" stroke-width="0.32">-70</text>
<text x="564.5" y="1143.9" font-size="18" fill="#ececec" font-weight="400" text-anchor="end" textLength="29.4" lengthAdjust="spacingAndGlyphs" stroke="#ececec" stroke-width="0.32">-75</text>
<text x="564.5" y="1177.6399999999999" font-size="18" fill="#ececec" font-weight="400" text-anchor="end" textLength="29.4" lengthAdjust="spacingAndGlyphs" stroke="#ececec" stroke-width="0.32">-80</text>
<text x="564.5" y="1211.38" font-size="18" fill="#ececec" font-weight="400" text-anchor="end" textLength="29.4" lengthAdjust="spacingAndGlyphs" stroke="#ececec" stroke-width="0.32">-85</text>
<text x="564.5" y="1245.12" font-size="18" fill="#ececec" font-weight="400" text-anchor="end" textLength="29.4" lengthAdjust="spacingAndGlyphs" stroke="#ececec" stroke-width="0.32">-90</text>
<text x="564.5" y="1278.8600000000001" font-size="18" fill="#ececec" font-weight="400" text-anchor="end" textLength="29.4" lengthAdjust="spacingAndGlyphs" stroke="#ececec" stroke-width="0.32">-95</text>
<text x="565" y="1312.6" font-size="18" fill="#ececec" font-weight="400" text-anchor="end" textLength="40.7" lengthAdjust="spacingAndGlyphs" stroke="#ececec" stroke-width="0.32">-100</text>
<text x="578.7" y="1337.7" font-size="18" fill="#ececec" font-weight="400" text-anchor="middle" textLength="11.3" lengthAdjust="spacingAndGlyphs" stroke="#ececec" stroke-width="0.32">0</text>
<text x="744.5" y="1337.7" font-size="18" fill="#ececec" font-weight="400" text-anchor="middle" textLength="33.9" lengthAdjust="spacingAndGlyphs" stroke="#ececec" stroke-width="0.32">500</text>
<text x="910.3" y="1337.7" font-size="18" fill="#ececec" font-weight="400" text-anchor="middle" textLength="45.2" lengthAdjust="spacingAndGlyphs" stroke="#ececec" stroke-width="0.32">1000</text>
<text x="1076.1" y="1337.7" font-size="18" fill="#ececec" font-weight="400" text-anchor="middle" textLength="45.2" lengthAdjust="spacingAndGlyphs" stroke="#ececec" stroke-width="0.32">1500</text>
<text x="1241.8999999999999" y="1337.7" font-size="18" fill="#ececec" font-weight="400" text-anchor="middle" textLength="45.2" lengthAdjust="spacingAndGlyphs" stroke="#ececec" stroke-width="0.32">2000</text>
<text x="1407.7" y="1337.7" font-size="18" fill="#ececec" font-weight="400" text-anchor="middle" textLength="45.2" lengthAdjust="spacingAndGlyphs" stroke="#ececec" stroke-width="0.32">2500</text>
<text x="1573.4999999999998" y="1337.7" font-size="18" fill="#ececec" font-weight="400" text-anchor="middle" textLength="45.2" lengthAdjust="spacingAndGlyphs" stroke="#ececec" stroke-width="0.32">3000</text>
<text x="1034.1" y="617.8" font-size="17.5" fill="#ececec" font-weight="400" text-anchor="middle" textLength="66.5" lengthAdjust="spacingAndGlyphs" stroke="#ececec" stroke-width="0.32">Спектр</text>
<text x="1074.4" y="1357.2" font-size="17.5" fill="#ececec" font-weight="400" text-anchor="middle" textLength="116.5" lengthAdjust="spacingAndGlyphs" stroke="#ececec" stroke-width="0.32">Частота [Гц]</text>
<text x="0" y="0" font-size="18" fill="#ececec" stroke="#ececec" stroke-width="0.32" textLength="147" lengthAdjust="spacingAndGlyphs" text-anchor="middle" transform="translate(510 968.9) rotate(-90)">Амплитуда [дБ]</text>
<g shape-rendering="crispEdges">
<path d="M580 1305.5V1169.1M581 1305.5V1185.6M582 1305.5V1187.1M583 1305.5V1175.6M584 1305.5V1173.1M585 1305.5V1161.8M586 1305.5V1151.8M587 1305.5V1143.7M588 1305.5V1133.5M589 1305.5V1144.5M590 1305.5V1161.7M591 1305.5V1186.1M592 1305.5V1179.0M593 1305.5V1176.8M594 1305.5V1163.1M595 1305.5V1168.1M596 1305.5V1163.3M597 1305.5V1165.3M598 1305.5V1167.3M599 1305.5V1171.8M600 1305.5V1167.8M601 1305.5V1169.1M602 1305.5V1165.2M603 1305.5V1156.8M604 1305.5V1160.1M605 1305.5V1157.3M606 1305.5V1152.2M607 1305.5V1142.1M608 1305.5V1154.7M609 1305.5V1152.8M610 1305.5V1167.3M611 1305.5V1176.2M612 1305.5V1196.8M613 1305.5V1194.5M614 1305.5V1182.4M615 1305.5V1174.9M616 1305.5V1157.9M617 1305.5V1142.5M618 1305.5V1152.5M619 1305.5V1156.1M620 1305.5V1166.7M621 1305.5V1163.8M622 1305.5V1168.8M623 1305.5V1175.2M624 1305.5V1176.9M625 1305.5V1176.8M626 1305.5V1178.9M627 1305.5V1172.4M628 1305.5V1159.1M629 1305.5V1153.7M630 1305.5V1177.3M631 1305.5V1196.1M632 1305.5V1172.7M633 1305.5V1141.9M634 1305.5V1145.8M635 1305.5V1160.6M636 1305.5V1162.4M637 1305.5V1152.8M638 1305.5V1137.9M639 1305.5V1154.3M640 1305.5V1176.5M641 1305.5V1187.7M642 1305.5V1183.1M643 1305.5V1180.1M644 1305.5V1175.9M645 1305.5V1208.5M646 1305.5V1210.9M647 1305.5V1181.8M648 1305.5V1157.6M649 1305.5V1144.0M650 1305.5V1154.4M651 1305.5V1158.2M652 1305.5V1162.9M653 1305.5V1161.3M654 1305.5V1159.5M655 1305.5V1162.8M656 1305.5V1154.6M657 1305.5V1157.1M658 1305.5V1155.1M659 1305.5V1160.3M660 1305.5V1170.5M661 1305.5V1163.7M662 1305.5V1171.1M663 1305.5V1165.9M664 1305.5V1158.1M665 1305.5V1143.9M666 1305.5V1133.9M667 1305.5V1123.6M668 1305.5V1124.7M669 1305.5V1122.5M670 1305.5V1111.1M671 1305.5V1119.2M672 1305.5V1124.5M673 1305.5V1131.5M674 1305.5V1149.5M675 1305.5V1170.5M676 1305.5V1169.6M677 1305.5V1178.3M678 1305.5V1173.7M679 1305.5V1181.0M680 1305.5V1178.8M681 1305.5V1177.6M682 1305.5V1173.7M683 1305.5V1166.8M684 1305.5V1165.5M685 1305.5V1167.2M686 1305.5V1167.9M687 1305.5V1167.2M688 1305.5V1165.0M689 1305.5V1164.8M690 1305.5V1176.4M691 1305.5V1197.3M692 1305.5V1216.0M693 1305.5V1221.7M694 1305.5V1190.5M695 1305.5V1170.0M696 1305.5V1177.5M697 1305.5V1183.2M698 1305.5V1193.2M699 1305.5V1205.0M700 1305.5V1188.5M701 1305.5V1179.2M702 1305.5V1174.9M703 1305.5V1177.6M704 1305.5V1186.5M705 1305.5V1192.1M706 1305.5V1202.9M707 1305.5V1201.5M708 1305.5V1202.2M709 1305.5V1196.8M710 1305.5V1201.6M711 1305.5V1199.8M712 1305.5V1191.8M713 1305.5V1201.6M714 1305.5V1201.5M715 1305.5V1208.8M716 1305.5V1201.6M717 1305.5V1205.2M718 1305.5V1207.5M719 1305.5V1205.0M720 1305.5V1207.9M721 1305.5V1214.7M722 1305.5V1216.3M723 1305.5V1215.7M724 1305.5V1209.4M725 1305.5V1202.0M726 1305.5V1208.8M727 1305.5V1216.2M728 1305.5V1228.7M729 1305.5V1249.1M730 1305.5V1242.6M731 1305.5V1232.2M732 1305.5V1223.9M733 1305.5V1216.8M734 1305.5V1232.1M735 1305.5V1241.0M736 1305.5V1246.6M737 1305.5V1252.9M738 1305.5V1255.9M739 1305.5V1256.1M740 1305.5V1262.8M741 1305.5V1268.3M742 1305.5V1264.6M743 1305.5V1254.7M744 1305.5V1260.2M745 1305.5V1265.7M746 1305.5V1270.6M747 1305.5V1269.0M748 1305.5V1278.4M749 1305.5V1285.7M750 1305.5V1292.4M751 1305.5V1304.4M752 1305.5V1305.5M753 1305.5V1305.5M754 1305.5V1305.5M755 1305.5V1302.7M756 1305.5V1301.9M757 1305.5V1301.9M758 1305.5V1305.3M759 1305.5V1300.4" stroke="#5d8787" stroke-width="1" fill="none" transform="translate(0.5 0)"/>
<rect x="596.5" y="1015.8" width="2.4" height="289.70000000000005" fill="#7aa8a8"/>
<rect x="667.2" y="993.9" width="2.0" height="311.6" fill="#7aa8a8"/>
<rect x="737.8000000000001" y="1186.3" width="1.6" height="119.20000000000005" fill="#7aa8a8"/>
<rect x="757.4" y="1271.6" width="1.8" height="33.90000000000009" fill="#7aa8a8"/>
<rect x="754.0" y="1284.5" width="3" height="21.0" fill="#7aa8a8"/>
<path d="M580 1305.5V1175.6M581 1305.5V1196.8M582 1305.5V1202.8M583 1305.5V1188.6M584 1305.5V1183.3M585 1305.5V1174.1M586 1305.5V1163.5M587 1305.5V1158.5M588 1305.5V1143.6M589 1305.5V1157.6M590 1305.5V1175.4M591 1305.5V1202.0M592 1305.5V1190.2M593 1305.5V1185.0M594 1305.5V1172.7M595 1305.5V1179.4M596 1305.5V1175.0M597 1305.5V1177.8M598 1305.5V1179.0M599 1305.5V1181.4M600 1305.5V1183.7M601 1305.5V1181.0M602 1305.5V1180.5M603 1305.5V1170.4M604 1305.5V1165.8M605 1305.5V1161.7M606 1305.5V1160.1M607 1305.5V1155.0M608 1305.5V1164.9M609 1305.5V1158.6M610 1305.5V1178.6M611 1305.5V1187.6M612 1305.5V1207.2M613 1305.5V1199.2M614 1305.5V1191.8M615 1305.5V1182.9M616 1305.5V1165.2M617 1305.5V1149.5M618 1305.5V1167.5M619 1305.5V1165.1M620 1305.5V1175.9M621 1305.5V1177.1M622 1305.5V1175.8M623 1305.5V1180.3M624 1305.5V1183.6M625 1305.5V1185.8M626 1305.5V1187.0M627 1305.5V1182.6M628 1305.5V1174.1M629 1305.5V1161.0M630 1305.5V1191.1M631 1305.5V1205.0M632 1305.5V1180.7M633 1305.5V1156.6M634 1305.5V1152.9M635 1305.5V1166.1M636 1305.5V1177.4M637 1305.5V1168.1M638 1305.5V1153.1M639 1305.5V1163.7M640 1305.5V1192.4M641 1305.5V1203.4M642 1305.5V1195.0M643 1305.5V1194.7M644 1305.5V1182.7M645 1305.5V1214.2M646 1305.5V1215.0M647 1305.5V1186.5M648 1305.5V1173.2M649 1305.5V1150.2M650 1305.5V1162.3M651 1305.5V1172.8M652 1305.5V1167.9M653 1305.5V1174.6M654 1305.5V1170.6M655 1305.5V1167.9M656 1305.5V1169.3M657 1305.5V1169.8M658 1305.5V1160.8M659 1305.5V1169.4M660 1305.5V1183.5M661 1305.5V1175.9M662 1305.5V1182.8M663 1305.5V1181.5M664 1305.5V1162.3M665 1305.5V1153.4M666 1305.5V1139.0M667 1305.5V1137.3M668 1305.5V1131.5M669 1305.5V1127.4M670 1305.5V1122.7M671 1305.5V1131.0M672 1305.5V1134.3M673 1305.5V1138.1M674 1305.5V1159.1M675 1305.5V1178.2M676 1305.5V1174.5M677 1305.5V1187.0M678 1305.5V1178.7M679 1305.5V1192.3M680 1305.5V1187.2M681 1305.5V1183.5M682 1305.5V1186.4M683 1305.5V1174.7M684 1305.5V1180.8M685 1305.5V1174.3M686 1305.5V1172.8M687 1305.5V1174.6M688 1305.5V1170.8M689 1305.5V1178.0M690 1305.5V1189.5M691 1305.5V1203.7M692 1305.5V1227.4M693 1305.5V1236.7M694 1305.5V1197.9M695 1305.5V1178.9M696 1305.5V1183.0M697 1305.5V1197.0M698 1305.5V1206.3M699 1305.5V1211.1M700 1305.5V1202.2M701 1305.5V1187.8M702 1305.5V1188.0M703 1305.5V1189.8M704 1305.5V1191.6M705 1305.5V1201.3M706 1305.5V1208.4M707 1305.5V1217.1M708 1305.5V1217.3M709 1305.5V1210.2M710 1305.5V1206.9M711 1305.5V1214.6M712 1305.5V1197.3M713 1305.5V1217.2M714 1305.5V1214.7M715 1305.5V1215.1M716 1305.5V1212.0M717 1305.5V1219.2M718 1305.5V1211.8M719 1305.5V1211.3M720 1305.5V1214.6M721 1305.5V1227.0M722 1305.5V1220.4M723 1305.5V1225.6M724 1305.5V1218.9M725 1305.5V1213.5M726 1305.5V1223.7M727 1305.5V1220.9M728 1305.5V1241.2M729 1305.5V1256.9M730 1305.5V1248.9M731 1305.5V1239.9M732 1305.5V1233.2M733 1305.5V1225.8M734 1305.5V1240.6M735 1305.5V1246.0M736 1305.5V1256.0M737 1305.5V1264.4M738 1305.5V1264.4M739 1305.5V1262.5M740 1305.5V1270.9M741 1305.5V1280.5M742 1305.5V1275.8M743 1305.5V1268.6M744 1305.5V1273.5M745 1305.5V1271.3M746 1305.5V1278.2M747 1305.5V1283.4M748 1305.5V1288.5M749 1305.5V1297.5M750 1305.5V1301.5M751 1305.5V1305.5M752 1305.5V1305.5M753 1305.5V1305.5M754 1305.5V1305.5M755 1305.5V1305.5M756 1305.5V1305.5M757 1305.5V1305.5M758 1305.5V1305.5M759 1305.5V1304.4" stroke="#92c2c2" stroke-width="1" fill="none" transform="translate(0.5 0)"/>
<rect x="667.4" y="1026" width="2" height="120" fill="#a8d8d8"/>
<rect x="666.5" y="1090" width="4" height="60" fill="#b8e8e8"/>
<path d="M580 1305.5V1212.3M581 1305.5V1211.9M582 1305.5V1209.8M583 1305.5V1210.2M584 1305.5V1197.1M585 1305.5V1205.1M586 1305.5V1184.5M587 1305.5V1180.7M588 1305.5V1177.2M589 1305.5V1177.7M590 1305.5V1196.7M591 1305.5V1225.6M592 1305.5V1216.4M593 1305.5V1220.4M594 1305.5V1202.8M595 1305.5V1189.0M596 1305.5V1193.2M597 1305.5V1186.9M598 1305.5V1188.5M599 1305.5V1189.9M600 1305.5V1190.4M601 1305.5V1196.9M602 1305.5V1186.9M603 1305.5V1193.7M604 1305.5V1195.4M605 1305.5V1178.4M606 1305.5V1180.3M607 1305.5V1183.3M608 1305.5V1186.9M609 1305.5V1186.3M610 1305.5V1197.6M611 1305.5V1197.7M612 1305.5V1215.4M613 1305.5V1206.9M614 1305.5V1201.0M615 1305.5V1212.1M616 1305.5V1194.2M617 1305.5V1184.4M618 1305.5V1191.1M619 1305.5V1184.1M620 1305.5V1182.6M621 1305.5V1197.5M622 1305.5V1186.5M623 1305.5V1201.8M624 1305.5V1202.2M625 1305.5V1200.5M626 1305.5V1206.5M627 1305.5V1199.7M628 1305.5V1191.0M629 1305.5V1198.6M630 1305.5V1208.4M631 1305.5V1214.0M632 1305.5V1199.7M633 1305.5V1184.4M634 1305.5V1191.0M635 1305.5V1185.8M636 1305.5V1196.2M637 1305.5V1197.5M638 1305.5V1188.3M639 1305.5V1196.7M640 1305.5V1194.6M641 1305.5V1208.5M642 1305.5V1208.5M643 1305.5V1211.6M644 1305.5V1198.4M645 1305.5V1231.8M646 1305.5V1226.1M647 1305.5V1207.6M648 1305.5V1187.3M649 1305.5V1175.1M650 1305.5V1193.0M651 1305.5V1185.8M652 1305.5V1189.4M653 1305.5V1187.4M654 1305.5V1193.8M655 1305.5V1203.2M656 1305.5V1196.5M657 1305.5V1187.8M658 1305.5V1191.3M659 1305.5V1190.7M660 1305.5V1192.0M661 1305.5V1193.6M662 1305.5V1185.2M663 1305.5V1187.1M664 1305.5V1183.5M665 1305.5V1171.6M666 1305.5V1175.2M667 1305.5V1175.5M668 1305.5V1166.6M669 1305.5V1170.5M670 1305.5V1158.4M671 1305.5V1170.8M672 1305.5V1172.3M673 1305.5V1177.3M674 1305.5V1189.7M675 1305.5V1186.5M676 1305.5V1197.6M677 1305.5V1208.6M678 1305.5V1208.9M679 1305.5V1210.1M680 1305.5V1206.8M681 1305.5V1209.0M682 1305.5V1195.6M683 1305.5V1199.5M684 1305.5V1202.7M685 1305.5V1198.8M686 1305.5V1208.7M687 1305.5V1191.5M688 1305.5V1210.1M689 1305.5V1210.1M690 1305.5V1207.6M691 1305.5V1213.2M692 1305.5V1236.3M693 1305.5V1240.7M694 1305.5V1208.0M695 1305.5V1188.3M696 1305.5V1208.6M697 1305.5V1220.5M698 1305.5V1224.5M699 1305.5V1231.0M700 1305.5V1206.3M701 1305.5V1201.7M702 1305.5V1200.8M703 1305.5V1204.7M704 1305.5V1215.5M705 1305.5V1212.0M706 1305.5V1220.4M707 1305.5V1221.5M708 1305.5V1223.1M709 1305.5V1215.6M710 1305.5V1225.4M711 1305.5V1222.8M712 1305.5V1223.9M713 1305.5V1237.0M714 1305.5V1240.1M715 1305.5V1236.5M716 1305.5V1240.6M717 1305.5V1228.1M718 1305.5V1233.5M719 1305.5V1241.7M720 1305.5V1233.9M721 1305.5V1242.1M722 1305.5V1242.9M723 1305.5V1249.4M724 1305.5V1236.8M725 1305.5V1230.8M726 1305.5V1230.5M727 1305.5V1230.4M728 1305.5V1246.8M729 1305.5V1259.5M730 1305.5V1268.5M731 1305.5V1262.0M732 1305.5V1243.8M733 1305.5V1256.6M734 1305.5V1257.4M735 1305.5V1261.0M736 1305.5V1263.9M737 1305.5V1271.4M738 1305.5V1272.8M739 1305.5V1269.3M740 1305.5V1286.9M741 1305.5V1292.7M742 1305.5V1287.4M743 1305.5V1276.3M744 1305.5V1289.4M745 1305.5V1291.1M746 1305.5V1298.8M747 1305.5V1297.0M748 1305.5V1298.3M749 1305.5V1305.5M750 1305.5V1305.5M751 1305.5V1305.5M752 1305.5V1305.5M753 1305.5V1305.5M754 1305.5V1305.5M755 1305.5V1305.5M756 1305.5V1305.5M757 1305.5V1305.5M758 1305.5V1305.5M759 1305.5V1305.5" stroke="#c6fcfc" stroke-width="1" fill="none" transform="translate(0.5 0)"/>
</g>
<rect x="579.5" y="1304.5" width="992.8" height="1.8" fill="#b0e0e0"/>
<rect x="624.3" y="178.6" width="33" height="33" rx="6" fill="#000" opacity="0.13"/>
<rect x="624.3" y="226.2" width="33" height="33" rx="6" fill="#000" opacity="0.13"/>
<rect x="624.3" y="274.2" width="33" height="33" rx="6" fill="#000" opacity="0.13"/>
<rect x="624.3" y="322.3" width="33" height="33" rx="6" fill="#000" opacity="0.13"/>
<rect x="624.3" y="370.2" width="33" height="33" rx="6" fill="#000" opacity="0.13"/>
<rect x="624.3" y="418.4" width="33" height="33" rx="6" fill="#000" opacity="0.13"/>
<g opacity="0.165" fill="#fff" stroke="#fff">
<rect x="624.3" y="178.6" width="33" height="33" rx="6" fill="none" stroke-width="1.9"/>
<path d="M627.4 189.2 L631.0999999999999 198.7 L640.3 180.7" fill="none" stroke-width="2.6"/>
<rect x="645.9999999999999" y="183.5" width="2.4" height="2.4" stroke="none"/>
<rect x="652.1999999999999" y="185.0" width="2.4" height="2.4" stroke="none"/>
<rect x="652.1999999999999" y="192.5" width="2.4" height="2.4" stroke="none"/>
<rect x="652.1999999999999" y="198.5" width="2.4" height="2.4" stroke="none"/>
<rect x="652.1999999999999" y="205.0" width="2.4" height="2.4" stroke="none"/>
<rect x="645.3999999999999" y="207.0" width="2.4" height="2.4" stroke="none"/>
<rect x="638.6999999999999" y="207.0" width="2.4" height="2.4" stroke="none"/>
<rect x="633.9999999999999" y="203.0" width="2.4" height="2.4" stroke="none"/>
<rect x="634.3" y="197.0" width="2.4" height="2.4" stroke="none"/>
<rect x="624.3" y="226.2" width="33" height="33" rx="6" fill="none" stroke-width="1.9"/>
<path d="M629.1999999999999 230.79999999999998 V253.79999999999998 H651.3" fill="none" stroke-width="1.7"/>
<path d="M632.0999999999999 237.0 C633.8 228.7 637.8 229.7 640.3 235.5 C642.0999999999999 238.7 643.8 231.2 646.8 231.7 C649.3 232.2 650.3 235.7 650.8 237.2" fill="none" stroke-width="2"/>
<rect x="624.3" y="274.2" width="33" height="33" rx="6" fill="none" stroke-width="1.9"/>
<path d="M628.8 290.7 H652.8 M640.8 279.7 V301.7" fill="none" stroke-width="3.4"/>
<rect x="624.3" y="322.3" width="33" height="33" rx="6" fill="none" stroke-width="1.9"/>
<rect x="629.0" y="336.7" width="23.3" height="4" stroke="none"/>
<rect x="624.3" y="370.2" width="33" height="33" rx="6" fill="none" stroke-width="1.9"/>
<path d="M627.0999999999999 380.5 L636.3 386.09999999999997 L627.0999999999999 391.2 Z M653.9 380.5 L644.8 386.09999999999997 L653.9 391.2 Z" stroke="none"/>
<rect x="639.1999999999999" y="374.9" width="3" height="3" stroke="none"/>
<rect x="639.1999999999999" y="381.8" width="3" height="3" stroke="none"/>
<rect x="639.1999999999999" y="388.7" width="3" height="3" stroke="none"/>
<rect x="639.1999999999999" y="395.4" width="3" height="3" stroke="none"/>
<rect x="624.3" y="418.4" width="33" height="33" rx="6" fill="none" stroke-width="1.9"/>
<g opacity="0.75"><rect x="630.0999999999999" y="423.09999999999997" width="22.9" height="2.5" stroke="none"/>
<rect x="630.0999999999999" y="444.7" width="22.9" height="2.4" stroke="none"/>
<rect x="640.8" y="425.4" width="2" height="19.5" stroke="none"/>
<path d="M639.3 429.4 L641.8 425.9 L644.3 429.4 Z M639.3 440.9 L641.8 444.4 L644.3 440.9 Z" stroke="none"/></g>
</g>
<rect x="602.3" y="652.4" width="33" height="33" rx="6" fill="#000" opacity="0.13"/>
<rect x="602.3" y="700.6" width="33" height="33" rx="6" fill="#000" opacity="0.13"/>
<rect x="602.3" y="748.6" width="33" height="33" rx="6" fill="#000" opacity="0.13"/>
<rect x="602.3" y="796.4" width="33" height="33" rx="6" fill="#000" opacity="0.13"/>
<rect x="602.3" y="844.6" width="33" height="33" rx="6" fill="#000" opacity="0.13"/>
<g opacity="0.165" fill="#fff" stroke="#fff">
<rect x="602.3" y="652.4" width="33" height="33" rx="6" fill="none" stroke-width="1.9"/>
<path d="M605.4 663.0 L609.0999999999999 672.5 L618.3 654.5" fill="none" stroke-width="2.6"/>
<rect x="623.9999999999999" y="657.3" width="2.4" height="2.4" stroke="none"/>
<rect x="630.1999999999999" y="658.8" width="2.4" height="2.4" stroke="none"/>
<rect x="630.1999999999999" y="666.3" width="2.4" height="2.4" stroke="none"/>
<rect x="630.1999999999999" y="672.3" width="2.4" height="2.4" stroke="none"/>
<rect x="630.1999999999999" y="678.8" width="2.4" height="2.4" stroke="none"/>
<rect x="623.3999999999999" y="680.8" width="2.4" height="2.4" stroke="none"/>
<rect x="616.6999999999999" y="680.8" width="2.4" height="2.4" stroke="none"/>
<rect x="611.9999999999999" y="676.8" width="2.4" height="2.4" stroke="none"/>
<rect x="612.3" y="670.8" width="2.4" height="2.4" stroke="none"/>
<rect x="602.3" y="700.6" width="33" height="33" rx="6" fill="none" stroke-width="1.9"/>
<path d="M607.1999999999999 705.2 V728.2 H629.3" fill="none" stroke-width="1.7"/>
<path d="M610.0999999999999 711.4 C611.8 703.1 615.8 704.1 618.3 709.9 C620.0999999999999 713.1 621.8 705.6 624.8 706.1 C627.3 706.6 628.3 710.1 628.8 711.6" fill="none" stroke-width="2"/>
<rect x="602.3" y="748.6" width="33" height="33" rx="6" fill="none" stroke-width="1.9"/>
<path d="M606.8 765.1 H630.8 M618.8 754.1 V776.1" fill="none" stroke-width="3.4"/>
<rect x="602.3" y="796.4" width="33" height="33" rx="6" fill="none" stroke-width="1.9"/>
<rect x="607.0" y="810.8" width="23.3" height="4" stroke="none"/>
<rect x="602.3" y="844.6" width="33" height="33" rx="6" fill="none" stroke-width="1.9"/>
<path d="M605.0999999999999 854.9 L614.3 860.5 L605.0999999999999 865.6 Z M631.9 854.9 L622.8 860.5 L631.9 865.6 Z" stroke="none"/>
<rect x="617.1999999999999" y="849.3000000000001" width="3" height="3" stroke="none"/>
<rect x="617.1999999999999" y="856.2" width="3" height="3" stroke="none"/>
<rect x="617.1999999999999" y="863.1" width="3" height="3" stroke="none"/>
<rect x="617.1999999999999" y="869.8000000000001" width="3" height="3" stroke="none"/>
</g>
</svg></body></html>
